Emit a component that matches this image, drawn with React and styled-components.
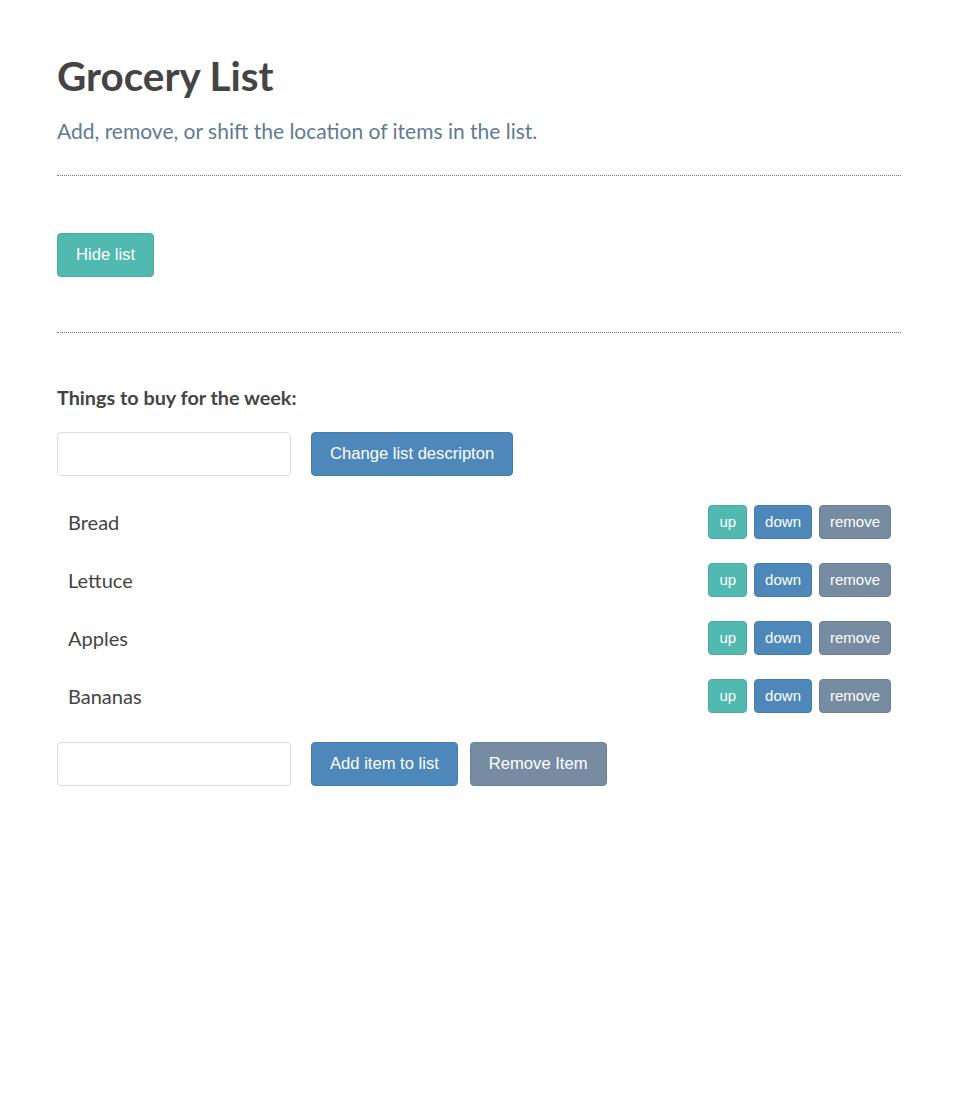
import React, { useState } from "react";
import styled, { createGlobalStyle } from "styled-components";

const GlobalStyle = createGlobalStyle`
  body {
    margin: 0;
    background: #fff;
    font-family: Lato, "Liberation Sans", sans-serif;
    color: #444;
  }
`;

export default function App() {
  const [items, setItems] = useState(["Bread", "Lettuce", "Apples", "Bananas"]);
  const [shown, setShown] = useState(true);

  const move = (i, d) => {
    const j = i + d;
    if (j < 0 || j >= items.length) return;
    const next = [...items];
    [next[i], next[j]] = [next[j], next[i]];
    setItems(next);
  };

  const remove = (i) => setItems(items.filter((_, k) => k !== i));

  return (
    <>
      <GlobalStyle />
      <SContainer>
        <STitle>Grocery List</STitle>
        <SLead>Add, remove, or shift the location of items in the list.</SLead>
        <SRule />
        <SToggleRow>
          <SButton $kind="teal" onClick={() => setShown(!shown)}>
            {shown ? "Hide list" : "Show list"}
          </SButton>
        </SToggleRow>
        <SRule $blue />
        {shown && (
          <SListSection>
            <SHeading>Things to buy for the week:</SHeading>
            <SForm>
              <SInput />
              <SButton $kind="blue">Change list descripton</SButton>
            </SForm>
            <SList>
              {items.map((item, i) => (
                <SItem key={item}>
                  <span>{item}</span>
                  <SActions>
                    <SSmallButton $kind="teal" onClick={() => move(i, -1)}>up</SSmallButton>
                    <SSmallButton $kind="blue" onClick={() => move(i, 1)}>down</SSmallButton>
                    <SSmallButton $kind="gray" onClick={() => remove(i)}>remove</SSmallButton>
                  </SActions>
                </SItem>
              ))}
            </SList>
            <SForm>
              <SInput />
              <SButtonGroup>
                <SButton $kind="blue">Add item to list</SButton>
                <SButton $kind="gray">Remove Item</SButton>
              </SButtonGroup>
            </SForm>
          </SListSection>
        )}
      </SContainer>
    </>
  );
}

const colors = {
  teal: { bg: "#52b9b1", border: "#4aa9a2" },
  blue: { bg: "#4e88ba", border: "#467cab" },
  gray: { bg: "#778ca2", border: "#6c8095" },
};

const SContainer = styled.div`
  width: 844px;
  margin-left: 57px;
  padding-top: 52px;
`;

const STitle = styled.h1`
  font-size: 40.4px;
  font-weight: 700;
  line-height: 48px;
  margin: 0;
  color: #444;
`;

const SLead = styled.p`
  font-size: 21px;
  line-height: 28px;
  margin: 17px 0 30px;
  color: #5e7b93;
`;

const SRule = styled.hr`
  border: 0;
  border-top: 1px dotted ${(p) => (p.$blue ? "#4f7699" : "#777")};
  margin: 0;
`;

const SToggleRow = styled.div`
  padding: 57px 0 55px;
`;

const SButton = styled.button`
  font-family: "Liberation Sans", Arial, sans-serif;
  font-size: 16.6px;
  line-height: 22px;
  padding: 10px 18px;
  color: #fff;
  background: ${(p) => colors[p.$kind].bg};
  border: 1px solid ${(p) => colors[p.$kind].border};
  border-radius: 4px;
  cursor: pointer;
`;

const SSmallButton = styled(SButton)`
  font-size: 15px;
  line-height: 20px;
  padding: 6px 10px;
`;

const SListSection = styled.div`
  padding-top: 51px;
`;

const SHeading = styled.h3`
  font-size: 19.8px;
  font-weight: 700;
  line-height: 26px;
  margin: 0 0 22px;
  color: #444;
`;

const SForm = styled.div`
  display: flex;
  align-items: center;
  gap: 20px;
`;

const SButtonGroup = styled.div`
  display: flex;
  gap: 12px;
`;

const SInput = styled.input`
  box-sizing: border-box;
  width: 234px;
  height: 44px;
  border: 1px solid #ddd;
  border-radius: 4px;
  padding: 0 12px;
  font-size: 16px;
`;

const SList = styled.ul`
  list-style: none;
  margin: 0;
  padding: 17px 0;
`;

const SItem = styled.li`
  display: flex;
  align-items: center;
  justify-content: space-between;
  height: 58px;
  padding: 0 10px 0 11px;
  font-size: 20px;
  line-height: 24px;
  color: #444;
`;

const SActions = styled.div`
  display: flex;
  gap: 7px;
`;
